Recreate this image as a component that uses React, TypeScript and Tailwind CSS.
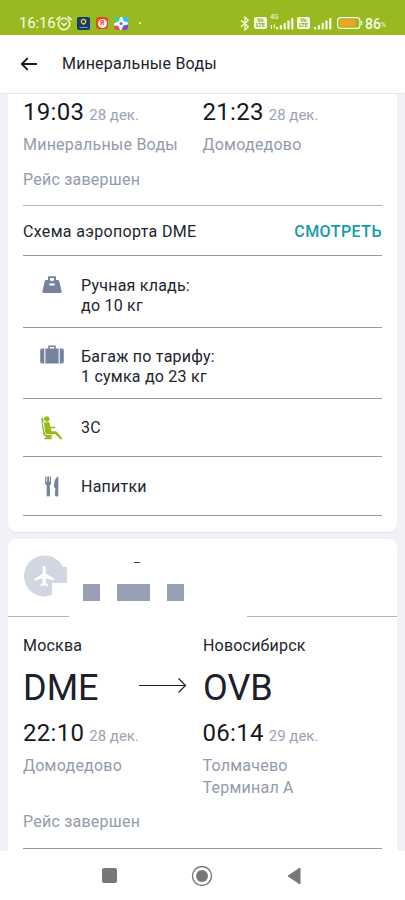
import type { ReactNode } from 'react';

interface Stop {
  time: string;
  date: string;
  place: string[];
}

function StopInfo({ time, date, place }: Stop) {
  return (
    <div className="w-[180px]">
      <div className="flex items-baseline whitespace-nowrap">
        <span className="text-2xl leading-7 tracking-[0.3px] text-[#15181f]">{time}</span>
        <span className="ml-[5px] text-[15px] leading-5 text-[#9aa3b2]">{date}</span>
      </div>
      <div className="mt-2 text-base leading-[22px] tracking-[0.23px] whitespace-nowrap text-[#929bac]">
        {place.map(line => (
          <div key={line}>{line}</div>
        ))}
      </div>
    </div>
  );
}

function Times({ from, to }: { from: Stop; to: Stop }) {
  return (
    <div className="flex">
      <StopInfo {...from} />
      <StopInfo {...to} />
    </div>
  );
}

function FeatureRow({ icon, className, children }: { icon: ReactNode; className: string; children: ReactNode }) {
  return (
    <div className={`flex border-b border-[#9299a8] ${className}`}>
      <div className="w-[58px] pl-4">{icon}</div>
      <div className="text-base leading-[19.5px] tracking-[0.23px] text-[#20252e]">{children}</div>
    </div>
  );
}

function HandBagIcon() {
  return (
    <svg width="20" height="18" viewBox="0 0 20 18" className="ml-[3px]">
      <path d="M7 5V1.300h6V5" fill="none" stroke="#74839b" strokeWidth="1.900" />
      <path d="M4.500 4h11c.9 0 1.500.5 1.800 1.300l2.200 9.400c.3 1.400-.4 2.300-1.600 2.300H2.100C.9 17 .2 16.100.5 14.700L2.700 5.300C3 4.500 3.600 4 4.500 4z" fill="#74839b" />
      <rect x="7.200" y="7.500" width="5.600" height="2" rx=".8" fill="#fff" />
      <rect x="8.200" y="2.400" width="3.600" height="2.400" fill="#fff" />
    </svg>
  );
}

function SuitcaseIcon() {
  return (
    <svg width="24" height="19" viewBox="0 0 24 19" className="-mt-0.5 ml-px" fill="#74839b">
      <path d="M9 4V1.300h6V4" fill="none" stroke="#74839b" strokeWidth="1.500" />
      <rect x="5.400" y="3.500" width="13.200" height="15" />
      <path d="M4.300 3.500v15H2A1.800 1.800 0 0 1 .2 16.700V5.300A1.800 1.800 0 0 1 2 3.500zM19.700 3.500v15H22a1.800 1.800 0 0 0 1.800-1.800V5.300A1.800 1.800 0 0 0 22 3.500z" />
    </svg>
  );
}

function SeatIcon() {
  return (
    <svg width="22" height="24" viewBox="0 0 22 24" className="-mt-[2px] ml-0.5" fill="#98b91c">
      <circle cx="5.800" cy="3" r="2.700" />
      <path d="M.3 1.800h2l.3 5.700H.7z" />
      <path d="M4.300 6.300h2.800c.9 0 1.500.5 1.700 1.300l.7 3.200h4.200c.9 0 .9 1.500 0 1.500H9.800l.6 3h4.100c.8 0 1.200.3 1.700.9l5.200 6.200-1.500 1.400-5.600-5.500H6.200c-1 0-1.700-.6-1.900-1.600L3 8c-.2-.9.4-1.700 1.300-1.700z" />
      <path d="M.8 8.300H2l1.900 9.200c.2.900.8 1.500 1.800 1.500h5.400v1.500H9.800v1.300h1.300v1.400H3.300v-1.400h1.500v-1.500C3.200 20.100 2.500 19.300 2.200 18z" />
    </svg>
  );
}

function CutleryIcon() {
  return (
    <svg width="14" height="21" viewBox="0 0 14 21" className="ml-1.5" fill="#74839b">
      <path d="M.2.500h1.200v5.300h.8V.500h1.800v5.300h.8V.500H6v6.200c0 1.400-.6 2.200-1.300 2.700l.4 9.300c0 1.100-.8 1.800-1.800 1.800s-1.800-.7-1.800-1.800L1.800 9.400C.9 8.900.2 8.100.2 6.700z" />
      <path d="M13.300.500v18.200c0 1.100-.6 1.800-1.600 1.800s-1.800-.7-1.800-1.800l.5-6.500-1.400-1.100C9 6 10.200 1.500 13.300.500z" />
    </svg>
  );
}

function AirlineLogo() {
  return (
    <svg width="44" height="42" viewBox="0 0 44 42">
      <path d="M20.500.5C28.600.5 35.500 5 38.900 12H43v16H28v12.100A20.500 20.500 0 1 1 20.500.5z" fill="#d0d6e2" />
      <path
        transform="translate(20.300 21.500) scale(.96)"
        d="M0-11C1.200-11 1.700-9.900 1.700-8.600V-3L9.900 2v2.300L1.700 1.700v5L4 8.500v1.700L0 9l-4 1.200V8.500l2.300-1.800v-5L-9.900 4.300V2l8.200-5v-5.600C-1.700-9.900-1.200-11 0-11z"
        fill="#fff"
      />
    </svg>
  );
}

function SignalIcon() {
  return (
    <svg width="18" height="13" viewBox="0 0 18 13" fill="#f7fce0">
      <rect x="0" y="10" width="2.200" height="2.500" rx=".7" />
      <rect x="3.800" y="8" width="2.200" height="4.500" rx=".7" />
      <rect x="7.600" y="6" width="2.200" height="6.500" rx=".7" />
      <rect x="11.400" y="3.500" width="2.200" height="9" rx=".7" />
      <rect x="15.200" y="1" width="2.200" height="11.500" rx=".7" />
    </svg>
  );
}

function VolteBadge() {
  return (
    <div className="flex h-3 w-[13px] flex-col items-center justify-center rounded-[2px] bg-[#f7fce0] text-[5.5px] leading-[5px] font-bold text-[#86a41e]">
      <span>Vo</span>
      <span>LTE</span>
    </div>
  );
}

function StatusBar() {
  return (
    <div className="flex h-[35px] bg-[#98b91f] pt-[13px] text-[#f9fce8]">
      <div className="flex h-5 items-center pl-[19px]">
        <span className="w-[36px] text-[15px] leading-5 tracking-[-0.15px] whitespace-nowrap">16:16</span>
        <svg width="16" height="15" viewBox="0 0 16 15" fill="none" stroke="#f7fce0" strokeWidth="1.400" className="ml-px">
          <circle cx="8" cy="8" r="5.700" />
          <path d="M.8 3.600 3.900.9M15.200 3.600 12.100.9M5.800 7.200 8 9.200l2.400-2" strokeLinecap="round" />
        </svg>
        <svg width="13" height="13" viewBox="0 0 13 13" className="ml-[5px]">
          <rect width="13" height="13" rx="2" fill="#123c6d" />
          <circle cx="6.500" cy="4.600" r="2.200" fill="#27445b" stroke="#eacb44" strokeWidth="1.300" />
          <path d="M5.500 6.500h2L6.500 8.500z" fill="#eacb44" />
          <path d="M2.500 10.500h8" stroke="#7f97ae" />
        </svg>
        <div className="ml-[6px] flex h-3 w-3 items-center justify-center rounded-[3px] bg-[#e9471f]">
          <span className="flex h-[9px] w-[9px] items-center justify-center rounded-full bg-[#fff3ec] text-[7px] leading-none font-bold text-[#e9471f]">Я</span>
        </div>
        <svg width="14" height="13" viewBox="0 0 14 13" className="ml-1.5">
          <rect width="14" height="13" rx="3" fill="#f5faff" />
          <path d="M2 0h4.500L4.500 4.500 0 6.500V2Q0 0 2 0z" fill="#4aca8c" />
          <path d="M8.500 0H12q2 0 2 2v3.500L9.500 4z" fill="#37b9ed" />
          <path d="M14 7.500V11q0 2-2 2H7.500l2-4.500z" fill="#7951b7" />
          <path d="M0 8.500l4.500.5L6 13H2q-2 0-2-2z" fill="#ee486b" />
          <circle cx="7" cy="6.500" r="1.500" fill="#3d82c5" />
        </svg>
        <span className="ml-[11px] h-0.5 w-0.5 rounded-full bg-[#f7fce0]" />
      </div>
      <div className="ml-auto flex h-5 items-center pr-[19px]">
        <svg width="10" height="15" viewBox="0 0 10 15" fill="none" stroke="#f7fce0" strokeWidth="1.300">
          <path d="M1 4.300 8.300 10.700 5 13.800V1.200l3.300 3.100L1 10.700" />
        </svg>
        <div className="ml-1">
          <VolteBadge />
        </div>
        <div className="ml-[3px] h-[14px] w-[10px] text-[7px] leading-[7px]">
          <div className="-mt-0.5">4G</div>
          <svg width="6" height="5" viewBox="0 0 6 5" fill="none" stroke="#f7fce0" className="mt-[3px]">
            <path d="M1.500 5V1L.3 2.200M4.300 0v4l1.200-1.200" />
          </svg>
        </div>
        <div className="-ml-1">
          <SignalIcon />
        </div>
        <div className="ml-[3px]">
          <VolteBadge />
        </div>
        <div className="ml-1">
          <SignalIcon />
        </div>
        <svg width="26" height="12" viewBox="0 0 26 12" className="ml-[5px]">
          <rect x=".6" y=".6" width="22.300" height="10.800" rx="3" fill="none" stroke="#f7fce0" strokeWidth="1.200" />
          <rect x="2.400" y="2.300" width="15.800" height="7.400" rx="1" fill="#eda528" />
          <path d="M24.600 4v4" stroke="#f7fce0" strokeWidth="1.400" />
        </svg>
        <span className="ml-0.5 pt-px text-[14px] leading-5 font-medium">86</span>
        <span className="pt-[4px] text-[7px]">%</span>
      </div>
    </div>
  );
}

function City({ name, code }: { name: string; code: string }) {
  return (
    <div>
      <div className="text-base leading-[22px] tracking-[0.2px] text-[#20252e]">{name}</div>
      <div className="mt-[10px] text-[36px] leading-[42px] text-[#1b212c]">{code}</div>
    </div>
  );
}

export default function App() {
  return (
    <div className="flex h-[900px] w-[405px] flex-col overflow-hidden bg-[#f0f2f7] font-['Roboto',sans-serif]">
      <StatusBar />
      <header className="flex h-[59px] shrink-0 items-center border-b border-[#e3e5ea] bg-white pl-5">
        <svg width="18" height="14" viewBox="0 0 18 14" fill="none" stroke="#181d2b" strokeWidth="1.900" strokeLinecap="round" strokeLinejoin="round">
          <path d="M16.300 7H1.800M7.200 1.600 1.800 7l5.400 5.400" />
        </svg>
        <h1 className="ml-6 text-base leading-6 tracking-[0.23px] text-[#20242e]">Минеральные Воды</h1>
      </header>

      <main className="h-[757px] shrink-0 overflow-hidden px-2">
        <section className="h-[438px] rounded-b-lg bg-white px-[15px] pt-1 shadow-[0_1px_1px_#e2e5eb]">
          <div className="h-[108px] border-b border-[#b0b4bc]">
            <Times
              from={{ time: '19:03', date: '28 дек.', place: ['Минеральные Воды'] }}
              to={{ time: '21:23', date: '28 дек.', place: ['Домодедово'] }}
            />
            <p className="mt-[13px] text-base leading-[22px] tracking-[0.23px] text-[#929bac]">Рейс завершен</p>
          </div>
          <div className="flex h-[50px] items-center justify-between border-b border-[#9299a8] pt-[2px]">
            <span className="text-base tracking-[0.33px] text-[#20252e]">Схема аэропорта DME</span>
            <span className="text-base font-medium tracking-[0.45px] text-[#159bab]">СМОТРЕТЬ</span>
          </div>
          <FeatureRow icon={<HandBagIcon />} className="h-[72px] pt-[20px]">
            Ручная кладь:
            <br />
            до 10 кг
          </FeatureRow>
          <FeatureRow icon={<SuitcaseIcon />} className="h-[71px] pt-[19px]">
            Багаж по тарифу:
            <br />1 сумка до 23 кг
          </FeatureRow>
          <FeatureRow icon={<SeatIcon />} className="h-[58px] pt-[19px]">
            3С
          </FeatureRow>
          <FeatureRow icon={<CutleryIcon />} className="h-[59px] pt-[19px]">
            <div className="mt-px">Напитки</div>
          </FeatureRow>
        </section>

        <section className="mt-[7px] h-[320px] rounded-t-lg bg-white">
          <div className="flex h-[77px] pt-4 pl-4">
            <AirlineLogo />
            <div className="ml-[15px]">
              <div className="mt-[7px] ml-[51px] h-px w-[6px] bg-[#40444c]" />
              <div className="mt-[21px] flex">
                <div className="h-[17px] w-[17px] bg-[#969fb3]" />
                <div className="ml-[17px] h-[17px] w-[33px] bg-[#969fb3]" />
                <div className="ml-[17px] h-[17px] w-[17px] bg-[#969fb3]" />
              </div>
            </div>
          </div>
          <div className="flex h-px justify-between">
            <div className="w-[61px] bg-[#b0b4bc]" />
            <div className="w-[150px] bg-[#b0b4bc]" />
          </div>
          <div className="px-[15px]">
            <div className="flex pt-[18px]">
              <div className="flex w-[180px]">
                <City name="Москва" code="DME" />
                <svg width="48" height="16" viewBox="0 0 48 16" fill="none" stroke="#1b212c" strokeWidth="1.200" className="mt-[42px] ml-[40px]">
                  <path d="M0 8.500h46.500M39.500 1.500l7 7-7 7" />
                </svg>
              </div>
              <City name="Новосибирск" code="OVB" />
            </div>
            <div className="h-[140px] border-b border-[#9299a8] pt-[10px]">
              <Times
                from={{ time: '22:10', date: '28 дек.', place: ['Домодедово'] }}
                to={{ time: '06:14', date: '29 дек.', place: ['Толмачево', 'Терминал А'] }}
              />
              <p className="mt-3 text-base leading-[22px] tracking-[0.23px] text-[#929bac]">Рейс завершен</p>
            </div>
          </div>
        </section>
      </main>

      <nav className="flex h-[49px] shrink-0 items-center bg-white">
        <div className="ml-[102px] h-[15px] w-[15px] rounded-[2px] bg-[#777]" />
        <svg width="22" height="22" viewBox="0 0 22 22" className="ml-[74px]">
          <circle cx="11" cy="11" r="9.500" fill="none" stroke="#777" strokeWidth="1.400" />
          <circle cx="11" cy="11" r="6" fill="#777" />
        </svg>
        <svg width="14" height="18" viewBox="0 0 14 18" className="ml-[74px]">
          <path d="M13 1v16L1 9z" fill="#777" stroke="#777" strokeLinejoin="round" />
        </svg>
      </nav>
    </div>
  );
}
